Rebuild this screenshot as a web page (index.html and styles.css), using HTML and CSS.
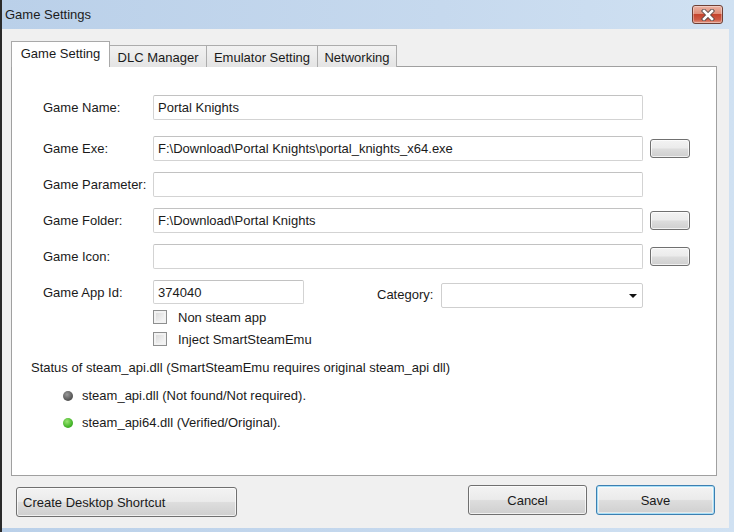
FILE: index.html
```html
<!DOCTYPE html>
<html>
<head>
<meta charset="utf-8">
<link rel="stylesheet" href="styles.css">
</head>
<body>
<div class="window">
  <div class="titlebar">
    <span class="title">Game Settings</span>
    <div class="close">
      <svg width="14" height="12" viewBox="0 0 14 12">
        <path d="M3 2 L11 10 M11 2 L3 10" stroke="#5a4a48" stroke-width="4.4" stroke-linecap="square"/>
        <path d="M3 2 L11 10 M11 2 L3 10" stroke="#ffffff" stroke-width="2.6" stroke-linecap="square"/>
      </svg>
    </div>
  </div>
  <div class="client">
    <div class="tabs">
      <div class="tab active">Game Setting</div>
      <div class="tab t-dlc">DLC Manager</div>
      <div class="tab t-emu">Emulator Setting</div>
      <div class="tab t-net">Networking</div>
    </div>
    <div class="panel">
      <div class="row first">
        <span class="label">Game Name:</span>
        <div class="input">Portal Knights</div>
      </div>
      <div class="row second">
        <span class="label">Game Exe:</span>
        <div class="input">F:\Download\Portal Knights\portal_knights_x64.exe</div>
        <div class="btn browse"></div>
      </div>
      <div class="row">
        <span class="label">Game Parameter:</span>
        <div class="input"></div>
      </div>
      <div class="row">
        <span class="label">Game Folder:</span>
        <div class="input">F:\Download\Portal Knights</div>
        <div class="btn browse"></div>
      </div>
      <div class="row">
        <span class="label">Game Icon:</span>
        <div class="input"></div>
        <div class="btn browse"></div>
      </div>
      <div class="row appid">
        <span class="label">Game App Id:</span>
        <div class="input short">374040</div>
        <span class="cat-label">Category:</span>
        <div class="select"><span class="arrow"></span></div>
      </div>
      <div class="check-row"><span class="checkbox"></span><span>Non steam app</span></div>
      <div class="check-row"><span class="checkbox"></span><span>Inject SmartSteamEmu</span></div>
      <div class="status">Status of steam_api.dll (SmartSteamEmu requires original steam_api dll)</div>
      <div class="dll-row first-dll"><span class="dot gray"></span><span>steam_api.dll (Not found/Not required).</span></div>
      <div class="dll-row"><span class="dot green"></span><span>steam_api64.dll (Verified/Original).</span></div>
    </div>
    <div class="footer">
      <div class="btn big shortcut">Create Desktop Shortcut</div>
      <div class="spacer"></div>
      <div class="btn big action">Cancel</div>
      <div class="btn big action save">Save</div>
    </div>
  </div>
</div>
</body>
</html>
```
FILE: styles.css
```css
* { box-sizing: border-box; }
html, body { margin: 0; padding: 0; }
body {
  width: 734px;
  height: 532px;
  overflow: hidden;
  font-family: "Liberation Sans", Arial, sans-serif;
  font-size: 13px;
  color: #1a1a1a;
  background: #cadcef;
}
.window {
  width: 734px;
  height: 532px;
  display: flex;
  flex-direction: column;
  border-left: 2px solid #2a2a2a;
  background: linear-gradient(to right, #bad0e9 0%, #c6d9ee 60%, #d0e1f2 100%);
}
.titlebar {
  height: 29px;
  flex: none;
  display: flex;
  align-items: center;
  padding-left: 3px;
  position: relative;
}
.title {
  font-size: 13px;
  color: #1c1c1c;
  margin-top: -1px;
}
.close {
  position: absolute;
  left: 690px;
  top: 5px;
  width: 31px;
  height: 19px;
  border: 1px solid #6e4036;
  border-radius: 3px;
  background: linear-gradient(to bottom, #ebb2a3 0%, #df8d78 45%, #c5452e 50%, #cf5a44 80%, #e19a86 100%);
  display: flex;
  align-items: center;
  justify-content: center;
  box-shadow: inset 0 0 0 1px rgba(255,255,255,0.35);
}
.client {
  flex: 1;
  margin: 0 5px 4px 0;
  background: #f0f0f0;
  display: flex;
  flex-direction: column;
  padding: 12px 12px 0 9px;
}
.tabs {
  display: flex;
  align-items: flex-end;
  height: 26px;
  position: relative;
  z-index: 2;
  margin-bottom: -1px;
}
.tab {
  height: 22px;
  border: 1px solid #acacac;
  border-bottom: none;
  background: linear-gradient(to bottom, #f2f2f2, #e4e4e4);
  display: flex;
  align-items: center;
  justify-content: center;
  padding-top: 2px;
  margin-left: -1px;
}
.tab.active {
  height: 26px;
  width: 99px;
  margin-left: 0;
  background: #ffffff;
  padding-top: 0;
  padding-bottom: 2px;
  z-index: 3;
  border-color: #a9a9a9;
}
.t-dlc { width: 98px; }
.t-emu { width: 112px; }
.t-net { width: 80px; }
.panel {
  width: 706px;
  height: 410px;
  background: #ffffff;
  border: 1px solid #a0a0a0;
  padding: 28px 0 0 0;
  position: relative;
  z-index: 1;
}
.row {
  display: flex;
  align-items: center;
  height: 25px;
  margin-top: 11px;
  padding-left: 31px;
}
.row.first { margin-top: 0; }
.row.second { margin-top: 16px; }
.label { width: 110px; flex: none; }
.input {
  width: 490px;
  height: 25px;
  border: 1px solid #d3d3d3;
  border-top-color: #c2c2c2;
  border-radius: 2px;
  background: #ffffff;
  padding-left: 4px;
  display: flex;
  align-items: center;
  white-space: nowrap;
}
.input.short { width: 151px; height: 24px; align-self: flex-start; }
.row.appid { align-items: flex-start; height: 26px; }
.row.appid .label { line-height: 24px; padding-top: 1px; }
.cat-label {
  margin-left: 73px;
  width: 64px;
  margin-top: 3px;
  line-height: 24px;
}
.select {
  width: 202px;
  height: 25px;
  margin-top: 3px;
  border: 1px solid #cfcfcf;
  border-radius: 2px;
  background: #ffffff;
  position: relative;
}
.arrow {
  position: absolute;
  right: 5px;
  top: 10px;
  width: 0;
  height: 0;
  border-left: 4px solid transparent;
  border-right: 4px solid transparent;
  border-top: 4px solid #111;
}
.btn {
  border: 1px solid #707070;
  border-radius: 3px;
  background: linear-gradient(to bottom, #f3f3f3 0%, #ebebeb 48%, #dddddd 52%, #cfcfcf 100%);
  box-shadow: inset 0 0 0 1px rgba(255,255,255,0.7);
}
.browse {
  width: 40px;
  height: 19px;
  margin-left: 7px;
  margin-top: -1px;
}
.check-row {
  display: flex;
  align-items: center;
  height: 22px;
  padding-left: 141px;
}
.checkbox {
  width: 14px;
  height: 14px;
  border: 1px solid #8e8f8f;
  background: linear-gradient(135deg, #d6d6d6 0%, #f4f4f4 80%);
  box-shadow: inset 0 0 0 2px #f2f2f2;
  margin-right: 11px;
  flex: none;
}
.status {
  padding-left: 19px;
  height: 28px;
  display: flex;
  align-items: center;
  margin-top: 3px;
}
.dll-row {
  display: flex;
  align-items: center;
  height: 27px;
  padding-left: 51px;
}
.first-dll { margin-top: 1px; }
.dot {
  width: 10px;
  height: 10px;
  border-radius: 50%;
  margin-right: 9px;
  flex: none;
}
.dot.gray { background: radial-gradient(circle at 40% 35%, #9a9a9a 0%, #5a5a5a 60%, #3c3c3c 100%); }
.dot.green { background: radial-gradient(circle at 40% 35%, #9be574 0%, #46b62a 60%, #2a8a16 100%); }
.footer {
  display: flex;
  align-items: flex-start;
  padding-top: 9px;
}
.big {
  height: 30px;
  display: flex;
  align-items: center;
}
.shortcut {
  width: 221px;
  margin-left: 5px;
  margin-top: 2px;
  padding-left: 6px;
  height: 30px;
}
.spacer { flex: 1; }
.action {
  width: 119px;
  justify-content: center;
}
.save {
  margin-left: 9px;
  margin-right: 2px;
  border-color: #3c7fb1;
  box-shadow: inset 0 0 0 1px #a8dff7, inset 0 0 0 2px rgba(255,255,255,0.5);
}
```
